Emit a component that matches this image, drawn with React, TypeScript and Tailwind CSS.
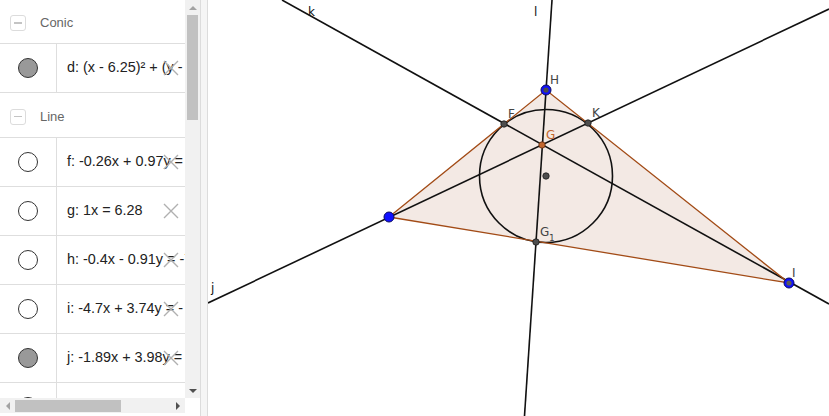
import React from "react";

type Item = { label: string; shown: boolean };

const conics: Item[] = [{ label: "d: (x - 6.25)² + (y -", shown: true }];
const lines: Item[] = [
  { label: "f: -0.26x + 0.97y =", shown: false },
  { label: "g: 1x = 6.28", shown: false },
  { label: "h: -0.4x - 0.91y = -7", shown: false },
  { label: "i: -4.7x + 3.74y = -", shown: false },
  { label: "j: -1.89x + 3.98y =", shown: true },
  { label: "k: 0.51x + 0.91y", shown: true },
];

function DeleteX() {
  return (
    <svg className="absolute left-[163px] top-1/2 -translate-y-1/2" width="16" height="16" viewBox="0 0 16 16">
      <path d="M1 1 L15 15 M15 1 L1 15" stroke="#b0b0b0" strokeWidth="1.4" fill="none" />
    </svg>
  );
}

function Row({ item, h }: { item: Item; h: string }) {
  return (
    <div className={`relative flex ${h} border-b border-[#dedede] shrink-0`}>
      <div className="w-[57px] shrink-0 flex items-center justify-center border-r border-[#dedede]">
        <div
          className={`w-[20px] h-[20px] rounded-full border border-[#333] ${item.shown ? "bg-[#999]" : "bg-white"}`}
        />
      </div>
      <div className="flex-1 min-w-0 overflow-hidden flex items-center pl-[10px] whitespace-nowrap text-[14.4px] text-[#222]">
        {item.label}
      </div>
      <DeleteX />
    </div>
  );
}

function Header({ title, h }: { title: string; h: string }) {
  return (
    <div className={`flex items-center ${h} border-b border-[#dedede] shrink-0 pl-[10px] pt-[3px]`}>
      <div className="w-[16px] h-[16px] rounded-[3px] border border-[#dcdcdc] flex items-center justify-center">
        <div className="w-[8px] h-[1.5px] bg-[#c4c4c4]" />
      </div>
      <span className="ml-[14px] text-[13px] text-[#666]">{title}</span>
    </div>
  );
}

function Graphics() {
  const A = [389, 217];
  const H = [546, 90];
  const I = [789, 283];
  return (
    <svg className="block" width="621" height="416" viewBox="208 0 621 416">
      <polygon points={`${A} ${H} ${I}`} fill="#f3e9e4" stroke="none" />
      <line x1="282" y1="0" x2="829" y2="304" stroke="#111" strokeWidth="1.6" />
      <line x1="552" y1="0" x2="524.5" y2="416" stroke="#111" strokeWidth="1.6" />
      <line x1="208" y1="303" x2="829" y2="9" stroke="#111" strokeWidth="1.6" />
      <circle cx="546" cy="176" r="66.5" fill="none" stroke="#111" strokeWidth="1.6" />
      <polyline points={`${A} ${H} ${I} ${A}`} fill="none" stroke="#a24b16" strokeWidth="1.3" />
      {[
        [504, 124],
        [588, 123],
        [536, 242],
        [546, 176],
      ].map(([x, y], i) => (
        <circle key={i} cx={x} cy={y} r="3.2" fill="#4d4d4d" stroke="#1a1a1a" strokeWidth="0.8" />
      ))}
      <circle cx="542" cy="145" r="3.2" fill="#c2662e" stroke="#5a2a10" strokeWidth="0.8" />
      <circle cx={A[0]} cy={A[1]} r="5" fill="#1010ff" stroke="#0b0b60" strokeWidth="1" />
      <circle cx={H[0]} cy={H[1]} r="5" fill="#1010ff" stroke="#0b0b60" strokeWidth="1" />
      <circle cx={H[0]} cy={H[1]} r="2.6" fill="#4d4d4d" />
      <circle cx={I[0]} cy={I[1]} r="5" fill="#1010ff" stroke="#0b0b60" strokeWidth="1" />
      <circle cx={I[0]} cy={I[1]} r="2.6" fill="#5a5a5a" />
      <g fontFamily="'DejaVu Sans', sans-serif" fontSize="12" fill="#444">
        <text x="308" y="16" fill="#111">k</text>
        <text x="534" y="16" fill="#111">l</text>
        <text x="211" y="292" fill="#111">j</text>
        <text x="550" y="84">H</text>
        <text x="508" y="118">F</text>
        <text x="592" y="117">K</text>
        <text x="546" y="139" fill="#c2662e">G</text>
        <text x="540" y="236">G</text>
        <text x="549" y="241" fontSize="9">1</text>
        <text x="792" y="277">I</text>
      </g>
    </svg>
  );
}

export default function App() {
  return (
    <div className="w-[829px] h-[416px] flex bg-white overflow-hidden" style={{ fontFamily: "'Liberation Sans', Arial, sans-serif" }}>
      <div className="w-[200px] h-full flex shrink-0">
        <div className="w-[185px] h-full flex flex-col">
          <div className="h-[398px] overflow-hidden flex flex-col">
            <Header title="Conic" h="h-[44px]" />
            {conics.map((c) => (
              <Row key={c.label} item={c} h="h-[49px]" />
            ))}
            <Header title="Line" h="h-[45px]" />
            {lines.map((l) => (
              <Row key={l.label} item={l} h="h-[49px]" />
            ))}
          </div>
          <div className="h-[15px] bg-[#f1f1f1] flex items-center">
            <div className="w-[15px] flex items-center justify-center">
              <div className="w-0 h-0 border-y-[4px] border-y-transparent border-r-[4px] border-r-[#a3a3a3]" />
            </div>
            <div className="w-[106px] h-[12px] bg-[#c1c1c1]" />
            <div className="flex-1" />
            <div className="w-[15px] flex items-center justify-center">
              <div className="w-0 h-0 border-y-[4px] border-y-transparent border-l-[4px] border-l-[#505050]" />
            </div>
          </div>
        </div>
        <div className="w-[15px] h-full flex flex-col">
          <div className="h-[398px] bg-[#f1f1f1] flex flex-col items-center">
            <div className="h-[15px] flex items-center justify-center">
              <div className="w-0 h-0 border-x-[4px] border-x-transparent border-b-[4px] border-b-[#a3a3a3]" />
            </div>
            <div className="w-[11px] h-[105px] bg-[#c1c1c1]" />
            <div className="flex-1" />
            <div className="h-[15px] flex items-center justify-center">
              <div className="w-0 h-0 border-x-[4px] border-x-transparent border-t-[4px] border-t-[#505050]" />
            </div>
          </div>
          <div className="flex-1 bg-white" />
        </div>
      </div>
      <div className="w-[8px] h-full shrink-0 bg-[#f5f5f5] border-x border-[#dcdcdc]" />
      <div className="flex-1 h-full">
        <Graphics />
      </div>
    </div>
  );
}
